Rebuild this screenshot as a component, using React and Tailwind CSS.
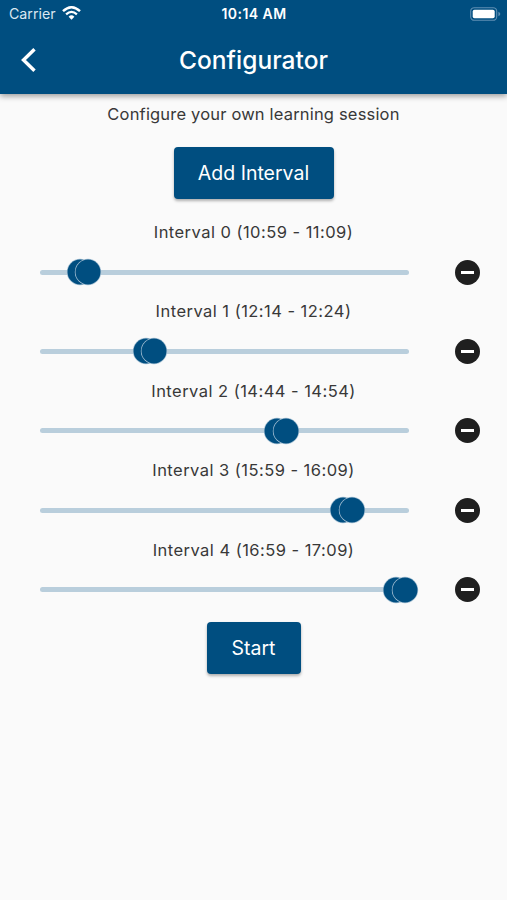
import { useState } from 'react'

const initialIntervals = [
    {start: '10:59', end: '11:09', from: 39.5, to: 48},
    {start: '12:14', end: '12:24', from: 105.5, to: 114},
    {start: '14:44', end: '14:54', from: 237, to: 245.5},
    {start: '15:59', end: '16:09', from: 303, to: 311.5},
    {start: '16:59', end: '17:09', from: 356, to: 364.5}
]

const StatusBar = () => (
    <div className="grid h-[27px] grid-cols-3 items-center pl-[9px] pr-[6px] text-[14px] leading-none">
        <div className="flex items-center gap-[6px]">
            <span className="pt-px text-[14.2px] text-[#dbe8f1]">Carrier</span>
            {/* wifi */}
            <svg className="h-[14px] w-[19px]" viewBox="0 0 19 14">
                <path d="M1 5.2Q9.5 -2.6 18 5.2" fill="none" stroke="white" strokeWidth="2.5" />
                <path d="M4.1 8.3Q9.5 3.4 14.9 8.3" fill="none" stroke="white" strokeWidth="2.3" />
                <path d="M6.6 10.7Q9.5 8 12.4 10.7L9.5 13.7Z" fill="white" />
            </svg>
        </div>
        <span className="-ml-[2px] pt-px text-center text-[14px] font-semibold tracking-[0.45px] whitespace-nowrap">10:14 AM</span>
        <svg className="h-[14px] w-[31px] justify-self-end" viewBox="0 0 31 14">
            <rect x="0.7" y="0.7" width="26" height="12.6" rx="3.6" fill="none" stroke="#5f8fb2" strokeWidth="1.1" />
            <rect x="2.7" y="2.7" width="22" height="8.6" rx="1.8" fill="white" />
            <path d="M28.4 4.8Q30.3 5.5 30.3 7T28.4 9.2Z" fill="#5f8fb2" />
        </svg>
    </div>
)

const Header = () => (
    <header className="h-[94px] bg-[#004e80] text-white shadow-[0_2px_6px_rgba(0,0,0,0.4)]">
        <StatusBar />
        <div className="grid h-[66px] grid-cols-[56px_1fr_56px] items-center">
            <button aria-label="Back" className="flex justify-center">
                <svg className="h-[26px] w-[18px]" viewBox="0 0 18 26">
                    <path d="M15.5 2.2L4.5 13L15.5 23.8" fill="none" stroke="white" strokeWidth="3.4" />
                </svg>
            </button>
            <h1 className="text-center text-[24.5px] font-medium tracking-[0.05px]">Configurator</h1>
        </div>
    </header>
)

const RaisedButton = ({ children, className, onClick }) => (
    <button
        onClick={onClick}
        className={`${className} h-[52px] rounded-[4px] bg-[#004e80] pt-[2px] text-[19.5px] text-white shadow-[0_2px_3px_rgba(0,0,0,0.3)]`}
    >
        {children}
    </button>
)

const Interval = ({ index, interval, handleRemove }) => (
    <li className="h-[79.4px]">
        <p className="h-6 text-center text-[16.5px] leading-6 tracking-[0.46px]">
            Interval {index} ({interval.start} - {interval.end})
        </p>
        <div className="flex h-[56px] items-center justify-between pl-10 pr-[27px]">
            <div className="relative h-[5px] w-[369px] rounded-full bg-[#b9cedc]">
                {[interval.from, interval.to].map((x) => (
                    <span
                        key={x}
                        className="absolute top-1/2 size-[25px] -translate-1/2 rounded-full bg-[#004e80] shadow-[0_0_0_0.7px_#a9c3d5]"
                        style={{ left: x }}
                    />
                ))}
            </div>
            <button
                aria-label="Remove interval"
                onClick={handleRemove}
                className="flex size-[25px] items-center justify-center rounded-full bg-[#1f1f1f]"
            >
                <span className="h-[3px] w-[13px] bg-white" />
            </button>
        </div>
    </li>
)

const App = () => {
    const [intervals, setIntervals] = useState(initialIntervals)

    const handleAdd = () => setIntervals([...intervals, initialIntervals[0]])
    const handleRemove = (index) => setIntervals(intervals.filter((_, i) => i !== index))

    return (
        <div className="min-h-screen bg-[#fafafa] font-['Inter',sans-serif] text-[#383838]">
            <Header />
            <main className="flex flex-col items-center pt-[8px]">
                <p className="h-6 text-[16.5px] leading-6 tracking-[0.18px]">Configure your own learning session</p>
                <RaisedButton className="mt-[21px] w-[160px]" onClick={handleAdd}>Add Interval</RaisedButton>
                <ul className="mt-[21px] w-full">
                    {intervals.map((interval, index) => (
                        <Interval
                            key={index}
                            index={index}
                            interval={interval}
                            handleRemove={() => handleRemove(index)}
                        />
                    ))}
                </ul>
                <RaisedButton className="mt-[5px] w-[94px]">Start</RaisedButton>
            </main>
        </div>
    )
}

export default App
